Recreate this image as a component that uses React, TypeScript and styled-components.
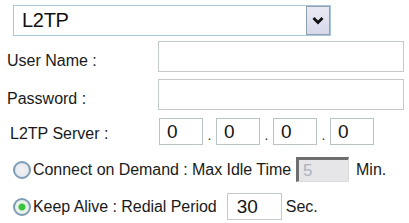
import styled, { createGlobalStyle } from 'styled-components'

const GlobalStyle = createGlobalStyle`
  html, body {
    margin: 0;
    padding: 0;
    background: #ffffff;
  }
  body {
    font-family: 'Liberation Sans', Arial, sans-serif;
    color: #161616;
  }
`

const Page = styled.div`
  width: 409px;
  height: 223px;
  padding-top: 5px;
  box-sizing: border-box;
  display: flex;
  flex-direction: column;
`

const SelectBox = styled.div`
  margin-left: 13px;
  width: 318px;
  height: 31px;
  box-sizing: border-box;
  border: 1px solid #a9c8da;
  display: flex;
  align-items: stretch;
  background: #fff;
`

const SelectValue = styled.div`
  flex: 1;
  display: flex;
  align-items: center;
  padding-left: 8px;
  font-size: 20px;
  letter-spacing: -0.3px;
  color: #111;
`

const DropButton = styled.div`
  width: 24px;
  box-sizing: border-box;
  border: 1px solid #8f9fb0;
  background: linear-gradient(#e9eaf4, #d6d9ea);
  display: flex;
  align-items: center;
  justify-content: center;
`

const Row = styled.div<{ $top: number; $height: number }>`
  margin-top: ${({ $top }) => $top}px;
  height: ${({ $height }) => $height}px;
  display: flex;
  align-items: center;
`

const Label = styled.div<{ $indent?: number; $drop?: number }>`
  width: 158px;
  padding-left: ${({ $indent }) => $indent ?? 7}px;
  padding-top: ${({ $drop }) => $drop ?? 8}px;
  box-sizing: border-box;
  font-size: 16px;
  color: #1a1a1a;
`

const TextField = styled.div`
  width: 246px;
  height: 100%;
  box-sizing: border-box;
  border: 1px solid #c3cacc;
  background: #fff;
`

const IpBox = styled.div`
  width: 44px;
  height: 100%;
  box-sizing: border-box;
  border: 1px solid #b9c2c4;
  padding-left: 7px;
  display: flex;
  align-items: center;
  font-size: 19px;
  color: #141414;
`

const Dot = styled.span`
  width: 13px;
  text-align: center;
  font-size: 14px;
  padding-top: 6px;
  color: #333;
`

const Radio = styled.span<{ $checked?: boolean }>`
  width: 18px;
  height: 18px;
  margin-left: 13px;
  margin-right: 2px;
  border-radius: 50%;
  box-sizing: border-box;
  border: 2px solid #7e9cb4;
  background: radial-gradient(circle, ${({ $checked }) =>
    $checked ? '#3bc43b 0 3px, #e8f2e8 4px' : '#f2f2f2 0, #dfe6ec 100%'});
  flex-shrink: 0;
`

const RadioText = styled.span`
  font-size: 16px;
  letter-spacing: -0.05px;
  color: #1a1a1a;
  white-space: nowrap;
`

const SmallField = styled.div<{ $disabled?: boolean; $width: number }>`
  width: ${({ $width }) => $width}px;
  height: 100%;
  margin-left: ${({ $disabled }) => ($disabled ? 5 : 10)}px;
  margin-right: ${({ $disabled }) => ($disabled ? 7 : 4)}px;
  box-sizing: border-box;
  display: flex;
  align-items: center;
  padding-left: ${({ $disabled }) => ($disabled ? 4 : 9)}px;
  font-size: ${({ $disabled }) => ($disabled ? 17 : 19)}px;
  color: ${({ $disabled }) => ($disabled ? '#a9b4c0' : '#141414')};
  background: ${({ $disabled }) => ($disabled ? '#e6e6e8' : '#fff')};
  border: 1px solid #c3cacc;
  ${({ $disabled }) =>
    $disabled &&
    `border-top: 3px solid #6e6e6e; border-left: 3px solid #6e6e6e; border-right: 1px solid #dcdcdc; border-bottom: 1px solid #dcdcdc;`}
`

const Unit = styled.span`
  font-size: 16px;
  color: #1a1a1a;
`

export default function App() {
  return (
    <>
      <GlobalStyle />
      <Page>
        <SelectBox>
          <SelectValue>L2TP</SelectValue>
          <DropButton>
            <svg width="12" height="9" viewBox="0 0 12 9">
              <path d="M1.5 2 L6 6.5 L10.5 2" fill="none" stroke="#111" strokeWidth="2.8" />
            </svg>
          </DropButton>
        </SelectBox>
        <Row $top={5} $height={31}>
          <Label>User Name :</Label>
          <TextField />
        </Row>
        <Row $top={7} $height={31}>
          <Label>Password :</Label>
          <TextField />
        </Row>
        <Row $top={8} $height={27}>
          <Label $indent={10} $drop={4} style={{ width: 159 }}>L2TP Server :</Label>
          <IpBox>0</IpBox>
          <Dot>.</Dot>
          <IpBox>0</IpBox>
          <Dot>.</Dot>
          <IpBox>0</IpBox>
          <Dot>.</Dot>
          <IpBox>0</IpBox>
        </Row>
        <Row $top={12} $height={25}>
          <Radio />
          <RadioText>Connect on Demand : Max Idle Time</RadioText>
          <SmallField $disabled $width={53}>5</SmallField>
          <Unit>Min.</Unit>
        </Row>
        <Row $top={11} $height={27}>
          <Radio $checked />
          <RadioText>Keep Alive : Redial Period</RadioText>
          <SmallField $width={55}>30</SmallField>
          <Unit>Sec.</Unit>
        </Row>
      </Page>
    </>
  )
}
